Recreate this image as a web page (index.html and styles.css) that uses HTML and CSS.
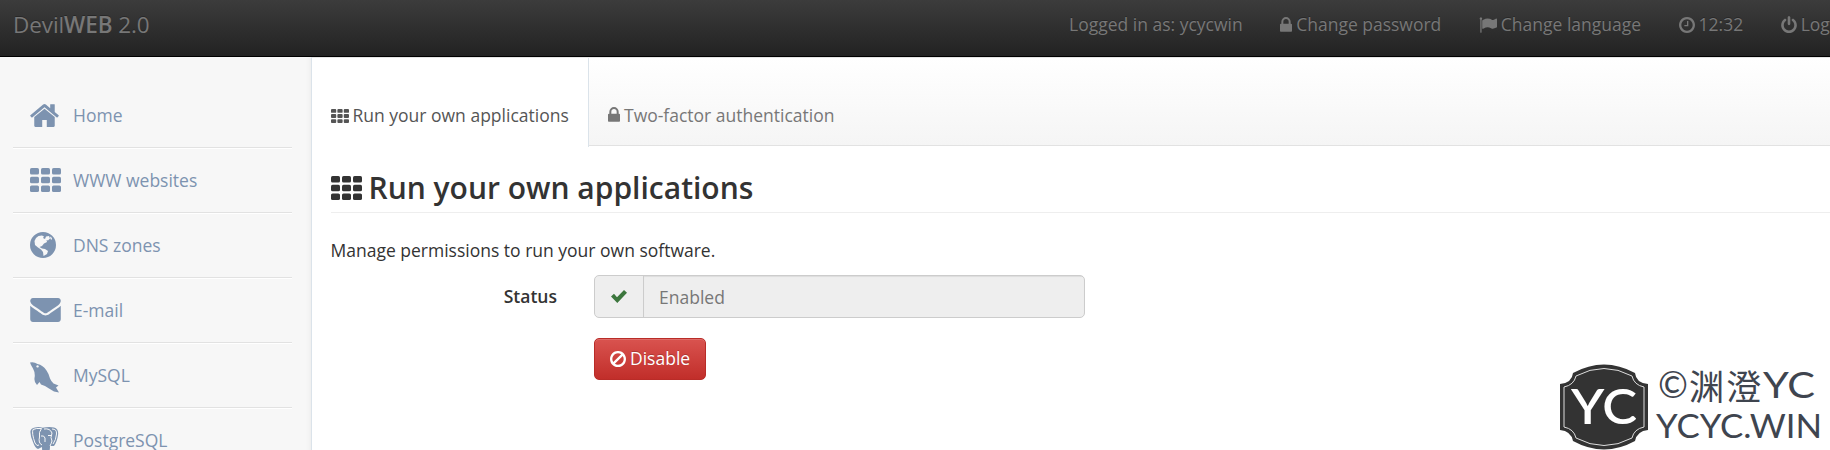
FILE: index.html
```html
<!DOCTYPE html>
<html lang="en">
<head>
<meta charset="utf-8">
<title>DevilWEB 2.0</title>
<link rel="stylesheet" href="styles.css">
</head>
<body>
<svg class="sprite" aria-hidden="true">
  <symbol id="lock" viewBox="320 128 1152 1536"><path d="M640 768h512v-192q0-106-75-181t-181-75-181 75-75 181v192zm832 96v576q0 40-28 68t-68 28h-960q-40 0-68-28t-28-68v-576q0-40 28-68t68-28h32v-192q0-184 132-316t316-132 316 132 132 316v192h32q40 0 68 28t28 68z"/></symbol>
  <symbol id="flag" viewBox="0 0 1792 1792"><path d="M320 256q0 72-64 110v1266q0 13-9.500 22.500t-22.500 9.500h-64q-13 0-22.500-9.500t-9.500-22.500v-1266q-64-38-64-110 0-53 37.500-90.500t90.500-37.500 90.500 37.500 37.500 90.500zm1472 64v763q0 25-12.500 38.500t-39.500 27.500q-215 116-369 116-61 0-123.500-22t-108.500-48-115.500-48-142.500-22q-192 0-464 146-17 9-33 9-26 0-45-19t-19-45v-742q0-32 31-55 21-14 79-43 236-120 421-120 107 0 200 29t219 88q38 19 88 19 54 0 117.500-21t110-47 88-47 54.500-21q26 0 45 19t19 45z"/></symbol>
  <symbol id="clock" viewBox="128 128 1536 1536"><path d="M1024 544v448q0 14-9 23t-23 9h-320q-14 0-23-9t-9-23v-64q0-14 9-23t23-9h224v-352q0-14 9-23t23-9h64q14 0 23 9t9 23zm416 352q0-148-73-273t-198-198-273-73-273 73-198 198-73 273 73 273 198 198 273 73 273-73 198-198 73-273zm224 0q0 209-103 385.500t-279.500 279.500-385.500 103-385.500-103-279.500-279.500-103-385.500 103-385.500 279.500-279.500 385.500-103 385.500 103 279.500 279.500 103 385.500z"/></symbol>
  <symbol id="power" viewBox="128 0 1536 1664"><path d="M1664 896q0 156-61 298t-164 245-245 164-298 61-298-61-245-164-164-245-61-298q0-182 80.500-343t226.500-270q43-32 95.500-25t83.500 50q32 42 24.500 94.500t-49.500 84.500q-98 74-151.500 181t-53.500 228q0 104 40.500 198.500t109.500 163.500 163.500 109.500 198.500 40.500 198.500-40.500 163.500-109.500 109.500-163.500 40.500-198.500q0-121-53.500-228t-151.500-181q-42-32-49.500-84.500t24.500-94.500q31-43 84-50t95 25q146 109 226.500 270t80.500 343zm-640-768v640q0 52-38 90t-90 38-90-38-38-90v-640q0-52 38-90t90-38 90 38 38 90z"/></symbol>
  <symbol id="ban" viewBox="128 125 1536 1536"><path d="M1440 893q0-161-87-295l-754 753q137 89 297 89 111 0 211.500-43.500t173.500-116.500 116-174.500 43-212.500zm-999 299l755-754q-135-91-300-91-148 0-273 73t-198 199-73 274q0 162 89 299zm1223-299q0 157-61 300t-163.500 246-245 164-298.500 61-298.500-61-245-164-163.500-246-61-300 61-299.500 163.500-245.500 245-164 298.500-61 298.500 61 245 164 163.500 245.500 61 299.500z"/></symbol>
  <symbol id="home" viewBox="80 250 1632 1290"><path d="M1472 992v480q0 26-19 45t-45 19h-384v-384h-256v384h-384q-26 0-45-19t-19-45v-480q0-1 .5-3t.5-3l575-474 575 474q1 2 1 6zm223-69l-62 74q-8 9-21 11h-3q-13 0-21-7l-692-577-692 577q-12 8-24 7-13-2-21-11l-62-74q-8-10-7-23.500t11-21.500l719-599q32-26 76-26t76 26l244 204v-195q0-14 9-23t23-9h192q14 0 23 9t9 23v408l219 182q10 8 11 21.500t-7 23.500z"/></symbol>
  <symbol id="mail" viewBox="0 256 1792 1408"><path d="M1792 710v794q0 66-47 113t-113 47h-1472q-66 0-113-47t-47-113v-794q44 49 101 87 362 246 497 345 57 42 92.500 65.500t94.500 48 110 24.500h2q51 0 110-24.500t94.500-48 92.500-65.500q170-123 498-345 57-39 100-87zm0-294q0 79-49 151t-122 123q-376 261-468 325-10 7-42.500 31t-54 38.500-52 32.500-57.500 27-50 9h-2q-23 0-50-9t-57.500-27-52-32.500-54-38.500-42.500-31q-91-64-262-182.500t-205-142.500q-62-42-117-115.500t-55-136.500q0-78 41.500-130t118.500-52h1472q65 0 112.500 47t47.500 113z"/></symbol>
  <symbol id="grid" viewBox="0 0 31 24"><rect width="9" height="6.600" rx="1.600"/><rect x="11" width="9" height="6.600" rx="1.600"/><rect x="22" width="9" height="6.600" rx="1.600"/><rect y="8.700" width="9" height="6.600" rx="1.600"/><rect x="11" y="8.700" width="9" height="6.600" rx="1.600"/><rect x="22" y="8.700" width="9" height="6.600" rx="1.600"/><rect y="17.400" width="9" height="6.600" rx="1.600"/><rect x="11" y="17.400" width="9" height="6.600" rx="1.600"/><rect x="22" y="17.400" width="9" height="6.600" rx="1.600"/></symbol>
  <symbol id="globe" viewBox="0 0 26 26"><path fill-rule="evenodd" d="M13 0a13 13 0 1 0 0 26a13 13 0 1 0 0-26zM8.500 4L12 3.500L14 4.500L13 6L15 7L16 4.500L19 4L20 6.500L18 8.500L16.500 8L17 10L14 11.500L12 14L9.500 15L12 16.500L15 17L18 19L17 22L13.500 24L13 20L11 17.500L8 15.500L5 13L4.500 9L6 6zM20 4.500L22 6L21.500 8L20.500 7z"/></symbol>
  <symbol id="dolphin" viewBox="0 0 29 31"><path fill-rule="evenodd" d="M0 .5Q4-.5 7.500 2Q13 3 16.500 8.500Q19 12 20 16.500Q21 19 23.500 21.500L28.500 23.500L26 25.500L29 30.500L24 29.500L19 26.500Q15 23.500 11 22.500L9.500 20L7 23Q4 20.500 4.500 16Q5.500 11 3 6.500L1 3zM7.500 3.200a1.200 1.200 0 1 0 .1 0z"/></symbol>
  <symbol id="elephant" viewBox="0 0 29 30"><path d="M5 .5Q9-.5 12.500 .8Q19-.6 24 .5Q29 2 28 8Q27 15 24 19H20Q20 28 15 29Q12 28 12 20L8 22Q5 21 3 15Q0 8 .5 4Q1 1 5 .5z"/><path class="cut" d="M11.500 1.500Q6 1 3 2.500Q1.500 6 5 16Q7 20 9 18M11.500 1.500Q8.500 5 9.500 10Q8 16 12 18M14 2Q20 1 22 6Q20 11 22 14Q21 17 20 19M22 2Q27 2 26.500 7Q26 13 23 17M11 9Q14 8 15 11V15M18 8.500H21"/></symbol>
</svg>

<header class="topbar">
  <div class="brand">Devil<b>WEB</b> 2.0</div>
  <nav class="user-nav">
    <span class="user-link">Logged in as: ycycwin</span>
    <a class="user-link"><svg class="icon lock"><use href="#lock"/></svg>Change password</a>
    <a class="user-link"><svg class="icon flag"><use href="#flag"/></svg>Change language</a>
    <span class="user-link"><svg class="icon round"><use href="#clock"/></svg>12:32</span>
    <a class="user-link"><svg class="icon power"><use href="#power"/></svg>Log out</a>
  </nav>
</header>

<div class="layout">
  <aside class="sidebar">
    <a class="side-item"><span class="side-icon"><svg class="i-home"><use href="#home"/></svg></span>Home</a>
    <a class="side-item"><span class="side-icon"><svg class="i-grid"><use href="#grid"/></svg></span>WWW websites</a>
    <a class="side-item"><span class="side-icon"><svg class="i-globe"><use href="#globe"/></svg></span>DNS zones</a>
    <a class="side-item"><span class="side-icon"><svg class="i-mail"><use href="#mail"/></svg></span>E-mail</a>
    <a class="side-item"><span class="side-icon"><svg class="i-dolphin"><use href="#dolphin"/></svg></span>MySQL</a>
    <a class="side-item"><span class="side-icon"><svg class="i-elephant"><use href="#elephant"/></svg></span>PostgreSQL</a>
  </aside>
  <main class="content">
    <nav class="tabs">
      <a class="tab active"><svg class="tab-grid"><use href="#grid"/></svg>Run your own applications</a>
      <a class="tab"><svg class="icon lock"><use href="#lock"/></svg>Two-factor authentication</a>
    </nav>
    <section class="panel">
      <h1 class="title"><svg class="title-grid"><use href="#grid"/></svg>Run your own applications</h1>
      <p class="intro">Manage permissions to run your own software.</p>
      <div class="row">
        <label class="label">Status</label>
        <div class="field">
          <span class="addon"><svg class="check" viewBox="0 0 16 13"><path d="M0 6.500L3 3.800L6 7.200L13 0L16 2.700L6.300 13z"/></svg></span>
          <span class="value">Enabled</span>
        </div>
      </div>
      <button class="disable"><svg class="icon round"><use href="#ban"/></svg>Disable</button>
    </section>
  </main>
</div>

<svg class="watermark" viewBox="0 0 270 86">
  <path class="badge-fill" d="M13 9Q44-8 75 9Q76 19 88 20V66Q77 67 75 77Q44 94 13 77Q11 67 0 66V20Q12 19 13 9z"/>
  <path class="badge-line" d="M16 12Q44-3 72 12Q74 21 84 23V63Q74 65 72 74Q44 89 16 74Q14 65 4 63V23Q14 21 16 12z"/>
  <text class="badge-text" x="11" y="60" textLength="66" lengthAdjust="spacingAndGlyphs">YC</text>
  <text class="mark copy" x="98" y="34" textLength="30" lengthAdjust="spacingAndGlyphs">©</text>
  <text class="mark cn" x="129" y="36" textLength="72">渊澄</text>
  <text class="mark latin" x="203" y="34" textLength="52" lengthAdjust="spacingAndGlyphs">YC</text>
  <text class="mark site" x="96" y="74" textLength="166" lengthAdjust="spacingAndGlyphs">YCYC.WIN</text>
</svg>
</body>
</html>
```
FILE: styles.css
```css
* { box-sizing: border-box; }
body {
  margin: 0;
  width: 1830px;
  height: 450px;
  overflow: hidden;
  background: #fff;
  color: #333;
  font: 17.5px/25px "Open Sans", sans-serif;
}
svg { display: block; flex: none; fill: currentColor; }
.sprite { display: none; }

.topbar {
  display: flex;
  height: 57px;
  padding-left: 13px;
  overflow: hidden;
  border-bottom: 1px solid #000;
  background: linear-gradient(#3c3c3c, #222);
  color: #777;
  text-shadow: 0 -1px 0 rgba(0, 0, 0, .25);
}
.brand { flex: none; width: 1056px; padding-top: 12px; font-size: 22.500px; font-weight: 400; letter-spacing: -.1px; white-space: nowrap; }
.brand b { font-weight: 600; }
.user-nav { display: flex; flex: none; align-items: flex-start; gap: 37.500px; padding-top: 12px; }
.user-link { display: flex; align-items: center; flex: none; gap: 4px; white-space: nowrap; }
.icon.lock { width: 12px; height: 16px; }
.icon.flag { width: 18px; height: 18px; }
.icon.round { width: 16px; height: 16px; }
.icon.power { width: 16px; height: 17px; }

.layout { display: flex; height: 393px; overflow: hidden; }
.sidebar {
  flex: none;
  width: 312px;
  padding: 26px 19px 0 13px;
  border-right: 1px solid #dbe3ea;
  background: #f7f7f7;
  box-shadow: inset -5px 0 5px -4px rgba(0, 0, 0, .05);
}
.side-item {
  display: flex;
  align-items: center;
  height: 65px;
  padding-left: 17px;
  border-bottom: 1px solid #e2e2e2;
  box-shadow: 0 1px 0 #fff;
  color: #7d93b0;
}
.side-icon { flex: none; width: 43px; }
.i-home { width: 29px; height: 23px; }
.i-grid { width: 31px; height: 24px; }
.i-globe { width: 26px; height: 26px; }
.i-mail { width: 31px; height: 24px; }
.i-dolphin { width: 29px; height: 31px; margin-top: 4px; }
.i-elephant { width: 29px; height: 30px; margin-top: 4px; }
.cut { fill: none; stroke: #f7f7f7; stroke-width: 1; }

.content { flex: 1; min-width: 0; }
.tabs {
  display: flex;
  height: 89px;
  border-top: 1px solid #e5e5e5;
  border-bottom: 1px solid #e2e2e2;
  background: linear-gradient(#fff, #f5f5f5);
}
.tab { display: flex; align-items: center; gap: 4px; padding: 27px 18px 0 19px; color: #777; white-space: nowrap; }
.tab.active { height: 89px; width: 277px; padding: 26px 0 0 18.500px; border-right: 1px solid #dbe3ea; background: #fff; color: #555; }
.tab-grid { width: 18px; height: 14px; }

.panel { padding: 20px 0 0 18.500px; }
.title {
  display: flex;
  align-items: center;
  gap: 7px;
  height: 47px;
  margin: 0;
  padding-bottom: 3px;
  border-bottom: 1px solid #eee;
  font-size: 30px;
  font-weight: 600;
}
.title-grid { width: 31px; height: 24px; }
.intro { margin: 25px 0 0; }
.row { display: flex; margin-top: 12px; }
.label { width: 226.500px; margin-right: 37px; padding-top: 9px; text-align: right; font-weight: 600; }
.field { display: flex; width: 491px; height: 43px; border: 1px solid #ccc; border-radius: 5px; background: #eee; overflow: hidden; }
.addon { display: flex; align-items: center; justify-content: center; width: 49px; border-right: 1px solid #ccc; color: #3c763d; }
.check { width: 16px; height: 13px; }
.value { flex: 1; padding: 9px 15px; color: #777; box-shadow: inset 0 1px 1px rgba(0, 0, 0, .075); }
.disable {
  display: flex;
  align-items: center;
  gap: 4px;
  width: 112px;
  height: 42px;
  margin: 20px 0 0 263.500px;
  padding: 0 0 1px 15px;
  border: 1px solid #b92c28;
  border-radius: 5px;
  background: linear-gradient(#d9534f, #c12e2a);
  box-shadow: inset 0 1px 0 rgba(255, 255, 255, .15);
  color: #fff;
  font: inherit;
  text-shadow: 0 -1px 0 rgba(0, 0, 0, .2);
}

.watermark { position: absolute; left: 1560px; top: 364px; width: 270px; height: 86px; overflow: visible; }
.badge-fill { fill: #333; }
.badge-line { fill: none; stroke: #ddd; stroke-width: 1; }
.badge-text { fill: #fff; font: 600 48px Lato, sans-serif; }
.mark { fill: #3f454f; font-family: Lato, sans-serif; }
.copy { font-size: 36px; }
.cn { font-family: "Noto Sans CJK SC", sans-serif; font-size: 35px; }
.latin { font-size: 37px; }
.site { font-size: 32px; }
```
